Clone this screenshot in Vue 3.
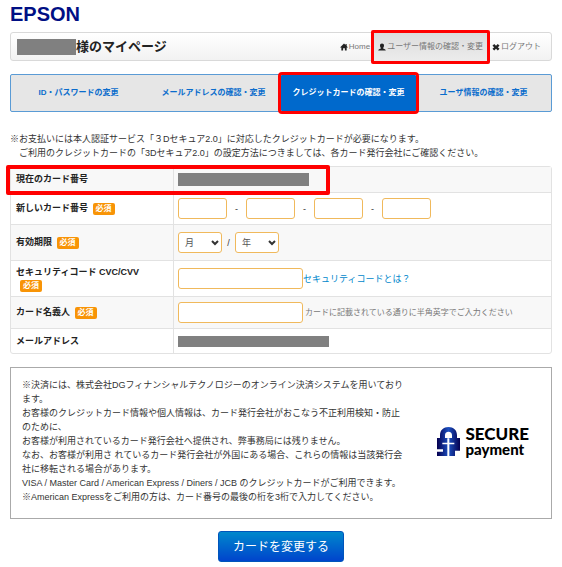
<script setup>
import { ref } from 'vue'

const tabs = [
  { label: 'ID・パスワードの変更' },
  { label: 'メールアドレスの確認・変更' },
  { label: 'クレジットカードの確認・変更', active: true },
  { label: 'ユーザ情報の確認・変更' }
]
const months = Array.from({ length: 12 }, (_, i) => String(i + 1).padStart(2, '0'))
const years = Array.from({ length: 10 }, (_, i) => String(2024 + i))

const number = ref(['', '', '', ''])
const month = ref('')
const year = ref('')
const code = ref('')
const holder = ref('')
</script>

<template>
  <div class="page">
    <div class="brand">EPSON</div>

    <header class="bar">
      <h1 class="title"><span class="mask mask-name"></span>様のマイページ</h1>
      <nav class="links">
        <a href="#" class="link">
          <svg class="icon" viewBox="0 0 18 18"><path d="M9 1 0 10h3v7h4v-5h4v5h4v-7h3l-3-3V2h-2.500v2.500z" /></svg>Home
        </a>
        <a href="#" class="link marked">
          <svg class="icon" viewBox="0 0 18 18"><path d="M9 1c3 0 4.500 2 4.500 4.500S12.500 10 11.500 11v1.500c2 1 6 1.500 6 4.500H.5c0-3 4-3.500 6-4.500V11c-1-1-2-3-2-5.500S6 1 9 1z" /></svg>ユーザー情報の確認・変更
        </a>
        <a href="#" class="link">
          <svg class="icon" viewBox="0 0 18 18"><path d="M5 2 9 6l4-4 4 4-4 3.500 4 3.500-4 4-4-4-4 4-4-4 4-3.500L1 6z" /></svg>ログアウト
        </a>
      </nav>
    </header>

    <nav class="tabs">
      <a v-for="tab in tabs" :key="tab.label" href="#" class="tab" :class="{ active: tab.active }">{{ tab.label }}</a>
    </nav>

    <p class="note">※お支払いには本人認証サービス「３Dセキュア2.0」に対応したクレジットカードが必要になります。<br>　ご利用のクレジットカードの「3Dセキュア2.0」の設定方法につきましては、各カード発行会社にご確認ください。</p>

    <form @submit.prevent>
      <div class="frame">
        <table class="grid">
          <tbody>
            <tr class="r-current">
              <th scope="row">現在のカード番号</th>
              <td><span class="mask mask-card"></span></td>
            </tr>
            <tr class="r-field">
              <th scope="row"><label for="n0">新しいカード番号</label> <span class="must">必須</span></th>
              <td>
                <div class="row parts">
                  <template v-for="(part, i) in number" :key="i">
                    <span v-if="i" class="dash">-</span>
                    <input :id="'n' + i" v-model="number[i]" class="box short" type="text" maxlength="4" :aria-label="'カード番号 ' + (i + 1)">
                  </template>
                </div>
              </td>
            </tr>
            <tr class="r-tall">
              <th scope="row"><label for="month">有効期限</label> <span class="must">必須</span></th>
              <td>
                <div class="row">
                  <span class="pick">
                    <select id="month" v-model="month" class="box">
                      <option value="">月</option>
                      <option v-for="m in months" :key="m">{{ m }}</option>
                    </select>
                    <svg class="arrow" viewBox="0 0 8 6"><path d="M1 1l3 3 3-3" /></svg>
                  </span>
                  <span class="slash">/</span>
                  <span class="pick">
                    <select id="year" v-model="year" class="box" aria-label="年">
                      <option value="">年</option>
                      <option v-for="y in years" :key="y">{{ y }}</option>
                    </select>
                    <svg class="arrow" viewBox="0 0 8 6"><path d="M1 1l3 3 3-3" /></svg>
                  </span>
                </div>
              </td>
            </tr>
            <tr class="r-tall">
              <th scope="row"><label for="code">セキュリティコード CVC/CVV</label><br><span class="must">必須</span></th>
              <td>
                <div class="row">
                  <input id="code" v-model="code" class="box long" type="text">
                  <a href="#" class="help">セキュリティコードとは？</a>
                </div>
              </td>
            </tr>
            <tr class="r-field">
              <th scope="row"><label for="holder">カード名義人</label> <span class="must">必須</span></th>
              <td>
                <div class="row">
                  <input id="holder" v-model="holder" class="box long" type="text">
                  <span class="hint">カードに記載されている通りに半角英字でご入力ください</span>
                </div>
              </td>
            </tr>
            <tr class="r-last">
              <th scope="row">メールアドレス</th>
              <td><span class="mask mask-mail"></span></td>
            </tr>
          </tbody>
        </table>
        <div class="outline"></div>
      </div>

      <section class="terms">
        <p class="text">※決済には、株式会社DGフィナンシャルテクノロジーのオンライン決済システムを用いており<br>ます。<br>お客様のクレジットカード情報や個人情報は、カード発行会社がおこなう不正利用検知・防止<br>のために、<br>お客様が利用されているカード発行会社へ提供され、弊事務局には残りません。<br>なお、お客様が利用さ れているカード発行会社が外国にある場合、これらの情報は当該発行会<br>社に移転される場合があります。<br>VISA / Master Card / American Express / Diners / JCB のクレジットカードがご利用できます。<br>※American Expressをご利用の方は、カード番号の最後の桁を3桁で入力してください。</p>
        <div class="secure">
          <svg class="lock" viewBox="0 0 69 87">
            <defs>
              <linearGradient id="steel" x1="0" y1="0" x2="1" y2="0">
                <stop offset="0" stop-color="#05004f" />
                <stop offset=".5" stop-color="#1b4fc0" />
                <stop offset="1" stop-color="#05004f" />
              </linearGradient>
            </defs>
            <path fill="url(#steel)" fill-rule="evenodd" d="M9 33V25C9 9 20 0 34.500 0S60 9 60 25v8h9v38H54v16H0V74h18v-7H0V33zM24 33h21v-8c0-7-4-11-10.500-11S24 18 24 25z" />
            <path fill="#fff" d="M31 34h6v13h15v5H37v35h-6V52H16v-5h15z" />
          </svg>
          <div class="words"><span class="big">SECURE</span><span class="small">payment</span></div>
        </div>
      </section>

      <button type="submit" class="submit">カードを変更する</button>
    </form>
  </div>
</template>

<style>
body {
  margin: 0;
  background: #fff;
}
</style>

<style scoped>
.page {
  padding: 4px 10px 6px;
  font: 9px/14px "Liberation Sans", "Noto Sans CJK JP", sans-serif;
  color: #333;
}
.page * {
  box-sizing: border-box;
}
a {
  text-decoration: none;
}
.brand {
  height: 28px;
  font-size: 20px;
  font-weight: bold;
  line-height: 20px;
  color: #000f84;
}
.bar {
  display: flex;
  align-items: center;
  justify-content: space-between;
  height: 29px;
  padding: 0 10px 0 6px;
  border: 1px solid #d9d9d9;
  border-radius: 3px;
  background: linear-gradient(#fff, #f2f2f2);
}
.title {
  display: flex;
  align-items: center;
  margin: 0;
  font-size: 13px;
  line-height: 16px;
  color: #222;
}
.mask {
  display: block;
  background: #808080;
}
.mask-name {
  width: 59px;
  height: 16px;
}
.mask-card {
  width: 131px;
  height: 13px;
}
.mask-mail {
  width: 151px;
  height: 11px;
}
.links {
  display: flex;
  align-items: center;
}
.link {
  display: flex;
  align-items: center;
  gap: 1px;
  font-size: 8px;
  color: #777;
  white-space: nowrap;
}
.link.marked {
  height: 34px;
  margin: 0 2px 0 1px;
  padding: 0 4px;
  border: 3px solid #f00;
  border-radius: 2px;
  background: linear-gradient(#dcdcdc, #ececec);
}
.icon {
  width: 8px;
  height: 8px;
  fill: #222;
}
.tabs {
  display: flex;
  height: 38px;
  margin: 13px 0 20px;
  border: 1px solid #5a9bd5;
  border-radius: 2px;
  background: #e6e6e6;
}
.tab {
  display: flex;
  flex: 1;
  align-items: center;
  justify-content: center;
  font-size: 8px;
  font-weight: bold;
  color: #0a6ccc;
  white-space: nowrap;
}
.tab.active {
  color: #fff;
  background: #0069cc;
  outline: 3px solid #f00;
  border-radius: 1px;
}
.note {
  margin: 0 0 6px;
  white-space: nowrap;
}
.frame {
  position: relative;
  border: 1px solid #e2e2e2;
  border-radius: 3px;
}
.grid {
  width: 100%;
  border-spacing: 0;
  table-layout: fixed;
}
th,
td {
  padding: 0 5px;
  text-align: left;
  vertical-align: middle;
  border-top: 1px solid #e2e2e2;
}
th {
  width: 30%;
  line-height: 13px;
  color: #222;
}
td {
  padding: 0 4px;
  border-left: 1px solid #e2e2e2;
}
tr:first-child > * {
  border-top: 0;
}
tr:nth-child(odd) {
  background: #f8f8f8;
}
.r-current,
.r-last {
  height: 25px;
}
.r-field {
  height: 32px;
}
.r-tall {
  height: 36px;
}
.outline {
  position: absolute;
  top: -2px;
  left: -5px;
  width: 60%;
  height: 30px;
  border: 4px solid #f00;
  border-radius: 2px;
  pointer-events: none;
}
.must {
  display: inline-block;
  margin-left: 2px;
  padding: 0 3px;
  border-radius: 2px;
  font-size: 8px;
  line-height: 12px;
  color: #fff;
  background: #f89406;
}
br + .must {
  margin-left: 4px;
}
.row {
  display: flex;
  align-items: center;
}
.box {
  height: 21px;
  margin: 0;
  padding: 0 6px;
  border: 1px solid #f0b95c;
  border-radius: 3px;
  font: inherit;
  color: #555;
  background: #fff;
  appearance: none;
}
.short {
  width: 49px;
}
.long {
  width: 125px;
}
.dash {
  width: 19px;
  text-align: center;
}
.slash {
  width: 13px;
  text-align: center;
}
.pick {
  position: relative;
  display: flex;
}
.pick .box {
  width: 44px;
}
.arrow {
  position: absolute;
  top: 8px;
  right: 3px;
  width: 8px;
  height: 6px;
  fill: none;
  stroke: #333;
  stroke-width: 2;
  pointer-events: none;
}
.help {
  color: #08c;
}
.hint {
  padding-left: 2px;
  font-size: 8px;
  color: #777;
}
.terms {
  display: flex;
  align-items: center;
  justify-content: space-between;
  margin: 13px 0 12px;
  padding: 10px 22px 14px 11px;
  border: 1px solid #aaa;
}
.text {
  margin: 0;
  white-space: nowrap;
}
.secure {
  display: flex;
  align-items: center;
  gap: 5px;
}
.lock {
  width: 23px;
  height: 29px;
}
.words {
  display: flex;
  flex-direction: column;
  font-family: Lato, "Liberation Sans", sans-serif;
  font-weight: 900;
  color: #000;
}
.big {
  font-size: 17px;
  line-height: 17px;
}
.small {
  font-size: 15px;
  line-height: 15px;
}
.submit {
  display: block;
  height: 31px;
  margin: 0 auto;
  padding: 0 14px;
  border: 1px solid #0055bb;
  border-radius: 3px;
  font: 12px/16px "Liberation Sans", "Noto Sans CJK JP", sans-serif;
  color: #fff;
  background: linear-gradient(#0088cc, #0044cc);
}
</style>
